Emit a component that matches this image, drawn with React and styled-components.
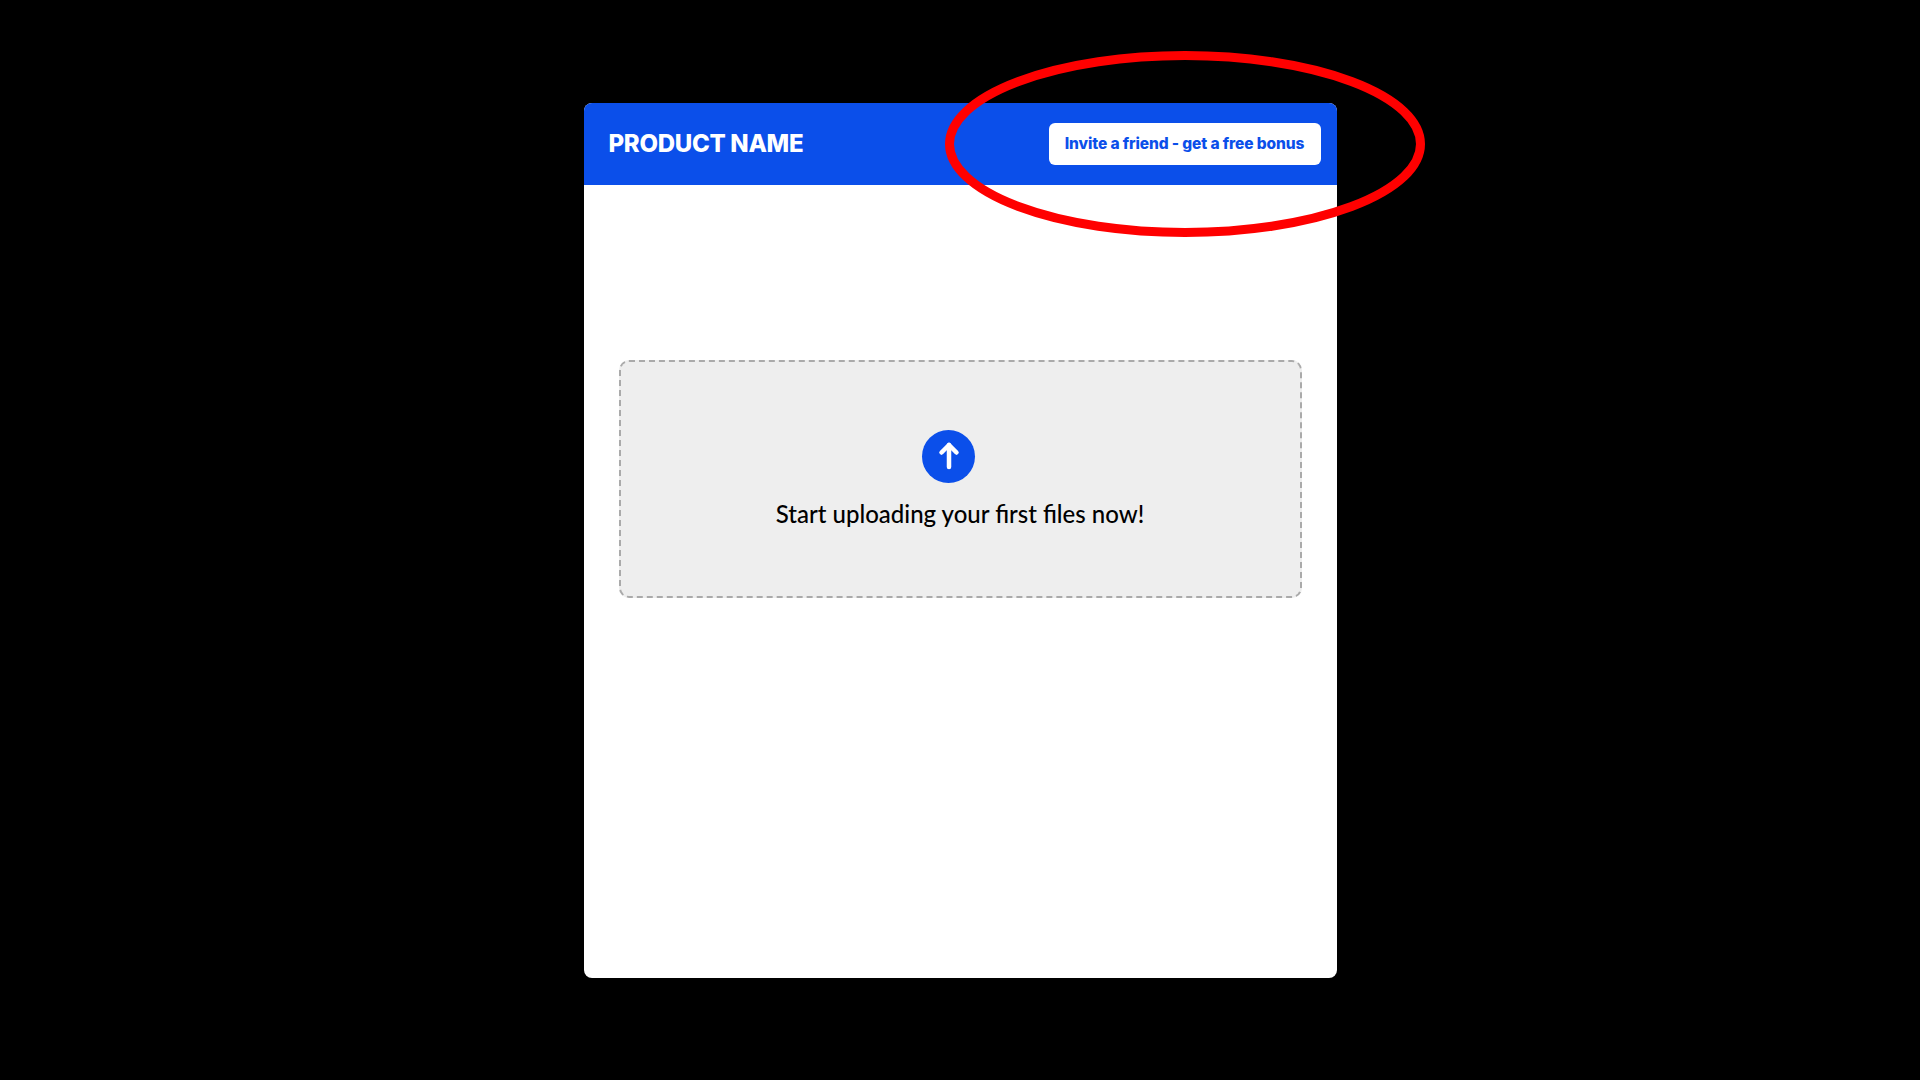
import styled, { createGlobalStyle } from "styled-components";

const GlobalStyle = createGlobalStyle`
    html, body {
        margin: 0;
        padding: 0;
        background-color: #000000;
    }
    * {
        box-sizing: border-box;
    }
`

export default function App() {
    return (
        <Page>
            <GlobalStyle />
            <Card>
                <Header>
                    <Title>PRODUCT NAME</Title>
                    <InviteButton>Invite a friend - get a free bonus</InviteButton>
                </Header>
                <Content>
                    <DropZone>
                        <UploadIcon>
                            <svg width="30" height="30" viewBox="0 0 30 30" fill="none" stroke="#FFFFFF" strokeWidth="4.5" strokeLinecap="round" strokeLinejoin="round">
                                <path d="M15 26V4" />
                                <path d="M7.5 11.5L15 4L22.5 11.5" />
                            </svg>
                        </UploadIcon>
                        <DropText>Start uploading your first files now!</DropText>
                    </DropZone>
                </Content>
                <Highlight viewBox="0 0 480 186" fill="none">
                    <ellipse cx="240" cy="93" rx="235.5" ry="88.5" stroke="#FF0000" strokeWidth="9" />
                </Highlight>
            </Card>
        </Page>
    )
}

const Page = styled.div`
    min-height: 100vh;
    display: flex;
    align-items: center;
    justify-content: center;
    background-color: #000000;
`

const Card = styled.div`
    position: relative;
    width: 753px;
    height: 875px;
    display: flex;
    flex-direction: column;
    background-color: #FFFFFF;
    border-radius: 8px;
`

const Header = styled.div`
    height: 82px;
    display: flex;
    align-items: center;
    justify-content: space-between;
    padding: 0 16px 0 25px;
    background-color: #0B4FEA;
    border-radius: 8px 8px 0 0;
`

const Title = styled.h1`
    margin: 0;
    font-family: "Inter", "Liberation Sans", sans-serif;
    font-size: 24px;
    font-weight: 800;
    letter-spacing: -0.3px;
    color: #FFFFFF;
`

const InviteButton = styled.button`
    width: 272px;
    height: 42px;
    padding: 0;
    border: none;
    border-radius: 6px;
    background-color: #FFFFFF;
    color: #0B4FEA;
    font-family: "Inter", "Liberation Sans", sans-serif;
    font-size: 15.5px;
    font-weight: 800;
    letter-spacing: -0.1px;
`

const Content = styled.div`
    flex: 1;
    padding: 175px 35px 0;
`

const DropZone = styled.div`
    height: 238px;
    display: flex;
    flex-direction: column;
    align-items: center;
    padding-top: 68px;
    background-color: #EEEEEE;
    border: 2px dashed #AAAAAA;
    border-radius: 10px;
`

const UploadIcon = styled.div`
    width: 53px;
    height: 53px;
    margin-right: 23px;
    margin-bottom: 16px;
    display: flex;
    align-items: center;
    justify-content: center;
    border-radius: 50%;
    background-color: #0B4FEA;
`

const DropText = styled.p`
    margin: 0;
    font-family: "Lato", "Liberation Sans", sans-serif;
    font-size: 24px;
    font-weight: 500;
    line-height: 30px;
    color: #000000;
`

const Highlight = styled.svg`
    position: absolute;
    top: -52px;
    left: 361px;
    width: 480px;
    height: 186px;
    overflow: visible;
`
